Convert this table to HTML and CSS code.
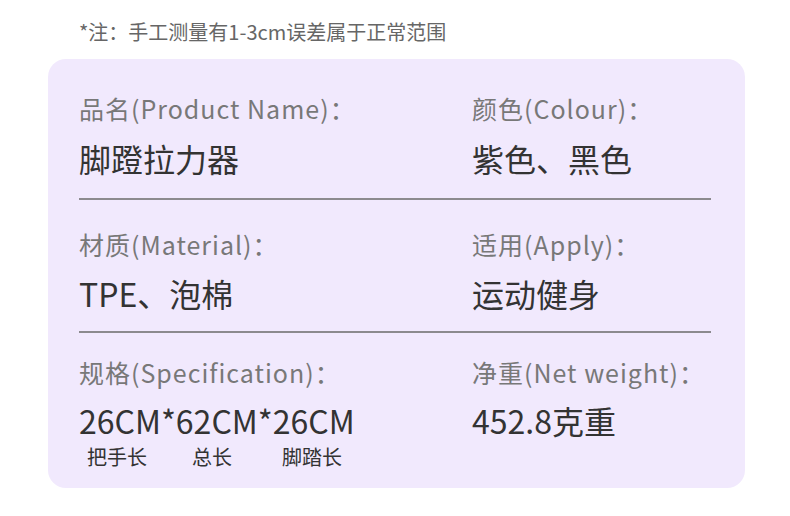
FILE: index.html
```html
<!DOCTYPE html>
<html lang="zh-CN">
<head>
<meta charset="utf-8">
<link rel="stylesheet" href="styles.css">
</head>
<body>
<p class="note">*注：手工测量有1-3cm误差属于正常范围</p>
<section class="card">
  <div class="row row-1">
    <div class="cell">
      <div class="label">品名(Product Name)：</div>
      <div class="value">脚蹬拉力器</div>
    </div>
    <div class="cell">
      <div class="label">颜色(Colour)：</div>
      <div class="value">紫色、黑色</div>
    </div>
  </div>
  <hr class="divider">
  <div class="row row-2">
    <div class="cell">
      <div class="label">材质(Material)：</div>
      <div class="value">TPE、泡棉</div>
    </div>
    <div class="cell">
      <div class="label">适用(Apply)：</div>
      <div class="value">运动健身</div>
    </div>
  </div>
  <hr class="divider">
  <div class="row row-3">
    <div class="cell">
      <div class="label">规格(Specification)：</div>
      <div class="value">26CM*62CM*26CM</div>
      <div class="sublabels">
        <span class="sub sub-a">把手长</span>
        <span class="sub sub-b">总长</span>
        <span class="sub sub-c">脚踏长</span>
      </div>
    </div>
    <div class="cell">
      <div class="label">净重(Net weight)：</div>
      <div class="value">452.8克重</div>
    </div>
  </div>
</section>
</body>
</html>
```

FILE: styles.css
```css
html, body {
  margin: 0;
  padding: 0;
  background: #ffffff;
}
body {
  width: 790px;
  height: 516px;
  font-family: "Noto Sans CJK SC", "Noto Sans", sans-serif;
  overflow: hidden;
}
.note {
  margin: 0;
  padding: 19px 0 0 79px;
  line-height: 26px;
  font-size: 20px;
  color: #666666;
  box-sizing: border-box;
  height: 59px;
}
.card {
  margin-left: 48px;
  width: 697px;
  height: 429px;
  box-sizing: border-box;
  background: #f1e9fd;
  border-radius: 18px;
  padding: 34px 34px 0 31px;
}
.row {
  display: grid;
  grid-template-columns: 393px 1fr;
}
.cell {
  display: flex;
  flex-direction: column;
}
.label {
  font-size: 25px;
  line-height: 30px;
  letter-spacing: 1px;
  color: #787878;
  white-space: nowrap;
}
.value {
  font-size: 32px;
  line-height: 40px;
  color: #333333;
  margin-top: 15px;
  white-space: nowrap;
}
.row-1 { padding-bottom: 20px; }
.row-2 { padding-top: 29px; padding-bottom: 18px; }
.row-2 .value { margin-top: 14px; }
.row-3 { padding-top: 24px; }
.row-3 .value {
  margin-top: 16px;
  line-height: 34px;
}
.divider {
  margin: 0;
  border: 0;
  height: 2px;
  width: 632px;
  background: #8c8a8e;
}
.sublabels {
  display: flex;
  padding-left: 8px;
  margin-top: 9px;
  font-size: 20px;
  line-height: 22px;
  color: #333333;
}
.sub-a { width: 105px; }
.sub-b { width: 90px; }
```
